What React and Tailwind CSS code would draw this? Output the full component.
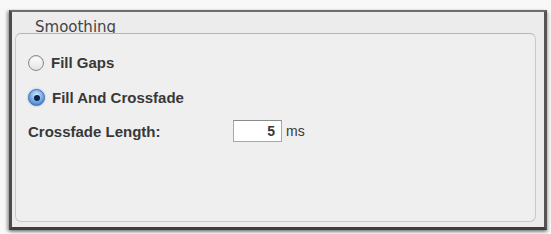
import React from 'react';

const RadioRow = ({ label, checked }) => (
    <div className="flex items-center h-[17px]">
        {checked ? (
            <div className="w-[17px] h-[17px] rounded-full border border-[#3f6fae] bg-[radial-gradient(circle_at_50%_35%,#d8ecff_0%,#7fb2ea_45%,#2f66b5_100%)] flex items-center justify-center shadow-[0_0_2px_rgba(60,110,190,0.6)]">
                <div className="w-[6px] h-[6px] rounded-full bg-[#0d2245]" />
            </div>
        ) : (
            <div className="w-[16px] h-[16px] rounded-full border border-[#8c8c8c] bg-[linear-gradient(#ffffff,#e2e2e2)] shadow-[inset_0_1px_1px_rgba(0,0,0,0.15)]" />
        )}
        <span className="ml-[7px] text-[15px] leading-[17px] font-bold text-[#383838] font-['Liberation_Sans',Arial,sans-serif]">
            {label}
        </span>
    </div>
);

export default function App() {
    return (
        <div className="w-[551px] h-[234px] bg-[#f8f8f8] pt-[10px] pl-[9px]">
            {/* outer window frame */}
            <div className="w-[538px] h-[220px] flex flex-col bg-[#ececec] border-t-2 border-t-[#6e6e6e] border-l-[3px] border-l-[#4c4c4c] border-r-[3px] border-r-[#555] border-b-[3px] border-b-[#3e3e3e] shadow-[-2px_1px_3px_rgba(0,0,0,0.35),1px_2px_3px_rgba(0,0,0,0.3)]">
                <div className="h-[21px] pl-[23px] pt-[2px]">
                    <span className="text-[15px] leading-[17px] text-[#444] font-['DejaVu_Sans',sans-serif]">Smoothing</span>
                </div>

                {/* group box */}
                <div className="flex-1 ml-[3px] mr-[8px] mb-[5px] rounded-[6px] border border-[#c9c9c9] border-t-[#b4b4b4] bg-[#efefef] pl-[12px] pt-[20px] flex flex-col">
                    <RadioRow label="Fill Gaps" />
                    <div className="mt-[18px]">
                        <RadioRow label="Fill And Crossfade" checked />
                    </div>
                    <div className="mt-[14px] flex items-center h-[22px] font-['Liberation_Sans',Arial,sans-serif] text-[#383838]">
                        <span className="w-[205px] text-[15px] leading-[17px] font-bold">Crossfade Length:</span>
                        <div className="w-[49px] h-[22px] bg-white border border-[#a8a8a8] border-t-[#8a8a8a] flex items-center justify-end pr-[6px] text-[14px] font-bold leading-[17px]">
                            5
                        </div>
                        <span className="ml-[4px] text-[14px] leading-[17px]">ms</span>
                    </div>
                </div>
            </div>
        </div>
    );
}
